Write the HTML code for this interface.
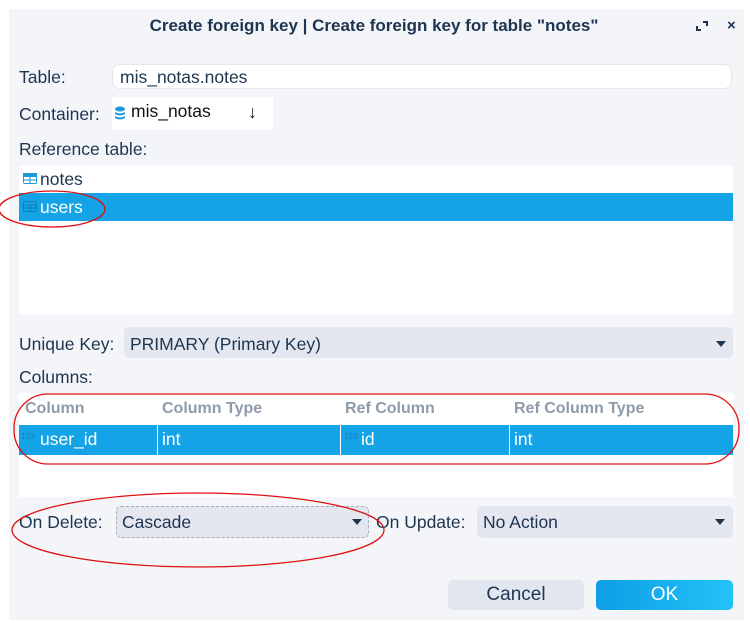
<!DOCTYPE html>
<html><head><style>
body{margin:0;width:750px;height:623px;background:#fff;font-family:"Liberation Sans",sans-serif;color:#1e3550;position:relative;overflow:hidden}
.dlg{position:absolute;left:9px;top:9px;width:735px;height:611px;background:#f4f5f9}
.a{position:absolute}
.lbl{font-size:17.5px;color:#1e3550}
.combo{background:#e4e7ef;border-radius:5px}
.tri{position:absolute;width:0;height:0;border-left:5px solid transparent;border-right:5px solid transparent;border-top:6px solid #1e3550}
</style></head><body>
<div class="dlg"></div>
<div class="a" style="left:0;width:748px;top:16px;text-align:center;font-weight:bold;font-size:17px;color:#1e3550">Create foreign key | Create foreign key for table "notes"</div>
<svg class="a" style="left:696px;top:20px" width="12" height="12"><path d="M1 6v4h4M7 2h4v4" stroke="#1e3550" stroke-width="2" fill="none"/></svg>
<div class="a" style="left:727px;top:17px;font-weight:bold;font-size:15px">×</div>

<div class="a lbl" style="left:19px;top:67px">Table:</div>
<div class="a" style="left:112px;top:64px;width:620px;height:25px;background:#fff;border:1px solid #e3e6ee;border-radius:8px;box-sizing:border-box"></div>
<div class="a lbl" style="left:120px;top:67px">mis_notas.notes</div>

<div class="a lbl" style="left:19px;top:104px">Container:</div>
<div class="a" style="left:112px;top:97px;width:161px;height:33px;background:#fff"></div>
<svg class="a" style="left:114px;top:106px" width="12" height="14"><ellipse cx="6" cy="3" rx="5" ry="2.5" fill="#1a9ad8"/><path d="M1 6q5 3 10 0v2q-5 3-10 0zM1 10q5 3 10 0v2q-5 3-10 0z" fill="#1a9ad8"/></svg>
<div class="a lbl" style="left:131px;top:101px;color:#111">mis_notas</div>
<div class="a" style="left:248px;top:102px;font-size:18px;font-weight:bold;color:#111">↓</div>

<div class="a lbl" style="left:19px;top:139px">Reference table:</div>
<div class="a" style="left:19px;top:165px;width:714px;height:150px;background:#fff"></div>
<div class="a" style="left:19px;top:193px;width:714px;height:28px;background:#15a3e8"></div>
<svg class="a" style="left:23px;top:173px" width="14" height="11"><rect x="0.5" y="0.5" width="13" height="10" rx="1.5" fill="#fff" stroke="#1a9ad8"/><rect x="0" y="0" width="14" height="4" fill="#1a9ad8"/><path d="M0 7h14M7 4v7" stroke="#1a9ad8"/></svg>
<div class="a lbl" style="left:40px;top:169px;font-size:17.5px">notes</div>
<svg class="a" style="left:23px;top:201px" width="14" height="11"><rect x="0.5" y="0.5" width="13" height="10" rx="1.5" fill="#15a3e8" stroke="#0c7fb8"/><path d="M0 4h14M0 7h14M7 4v7" stroke="#0c7fb8"/></svg>
<div class="a lbl" style="left:40px;top:197px;font-size:17.5px;color:#fff">users</div>

<div class="a lbl" style="left:19px;top:334px">Unique Key:</div>
<div class="a combo" style="left:124px;top:327px;width:609px;height:31px"></div>
<div class="a lbl" style="left:130px;top:334px">PRIMARY (Primary Key)</div>
<div class="tri" style="left:716px;top:341px"></div>

<div class="a lbl" style="left:19px;top:367px">Columns:</div>
<div class="a" style="left:19px;top:393px;width:714px;height:104px;background:#fff"></div>
<div class="a" style="left:19px;top:425px;width:714px;height:30px;background:#15a3e8"></div>
<div class="a" style="left:157px;top:425px;width:1px;height:30px;background:#fff"></div>
<div class="a" style="left:340px;top:425px;width:1px;height:30px;background:#fff"></div>
<div class="a" style="left:509px;top:425px;width:1px;height:30px;background:#fff"></div>
<div class="a" style="top:400px;left:25px;font-weight:bold;font-size:16px;color:#8f9bab">Column</div>
<div class="a" style="top:400px;left:162px;font-weight:bold;font-size:16px;color:#8f9bab">Column Type</div>
<div class="a" style="top:400px;left:345px;font-weight:bold;font-size:16px;color:#8f9bab">Ref Column</div>
<div class="a" style="top:400px;left:514px;font-weight:bold;font-size:16px;color:#8f9bab">Ref Column Type</div>
<div class="a" style="top:432px;left:21px;font-size:8px;color:#0c7fb8">123</div>
<div class="a" style="top:429px;left:40px;font-size:17.5px;color:#fff">user_id</div>
<div class="a" style="top:429px;left:162px;font-size:17.5px;color:#fff">int</div>
<div class="a" style="top:432px;left:344px;font-size:8px;color:#0c7fb8">123</div>
<div class="a" style="top:429px;left:361px;font-size:17.5px;color:#fff">id</div>
<div class="a" style="top:429px;left:514px;font-size:17.5px;color:#fff">int</div>

<div class="a lbl" style="left:19px;top:512px">On Delete:</div>
<div class="a combo" style="left:116px;top:506px;width:253px;height:32px;border:1px dashed #aab;box-sizing:border-box"></div>
<div class="a lbl" style="left:122px;top:512px">Cascade</div>
<div class="tri" style="left:352px;top:519px"></div>
<div class="a lbl" style="left:376px;top:512px">On Update:</div>
<div class="a combo" style="left:477px;top:506px;width:256px;height:32px"></div>
<div class="a lbl" style="left:483px;top:512px">No Action</div>
<div class="tri" style="left:715px;top:519px"></div>

<div class="a" style="left:448px;top:580px;width:136px;height:30px;background:#e2e6ee;border-radius:5px;text-align:center;line-height:30px;font-size:19px">Cancel</div>
<div class="a" style="left:596px;top:580px;width:137px;height:30px;background:linear-gradient(90deg,#0e9ee6,#22c2f8);border-radius:5px;text-align:center;line-height:30px;font-size:19px;color:#fff">OK</div>

<svg class="a" style="left:0;top:0" width="750" height="623"><g fill="none" stroke="#e01010" stroke-width="1.3">
<ellipse cx="52" cy="209" rx="53" ry="18"/>
<rect x="14" y="394" width="725" height="70" rx="34"/>
<ellipse cx="198" cy="530" rx="186" ry="37"/></g></svg>
</body></html>
